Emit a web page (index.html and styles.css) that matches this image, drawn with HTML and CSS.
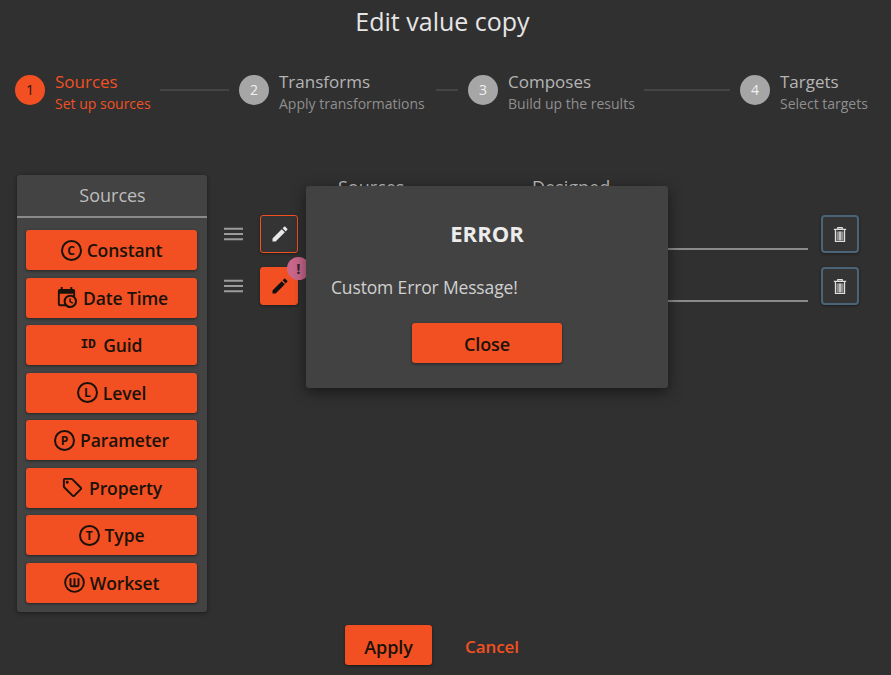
FILE: index.html
```html
<!DOCTYPE html>
<html lang="en">
<head>
<meta charset="utf-8">
<title>Edit value copy</title>
<link rel="stylesheet" href="styles.css">
</head>
<body>
<div class="page">
  <h1 class="title">Edit value copy</h1>
  <div class="stepper">
    <div class="step step-active step-w1"><span class="num">1</span><div class="step-text"><div class="step-title">Sources</div><div class="step-sub">Set up sources</div></div></div>
    <div class="line line-1"></div>
    <div class="step step-w2"><span class="num">2</span><div class="step-text"><div class="step-title">Transforms</div><div class="step-sub">Apply transformations</div></div></div>
    <div class="line line-2"></div>
    <div class="step step-w3"><span class="num">3</span><div class="step-text"><div class="step-title">Composes</div><div class="step-sub">Build up the results</div></div></div>
    <div class="line line-3"></div>
    <div class="step step-w4"><span class="num">4</span><div class="step-text"><div class="step-title">Targets</div><div class="step-sub">Select targets</div></div></div>
  </div>
  <div class="main">
    <aside class="panel">
      <div class="panel-head">Sources</div>
      <div class="panel-list">
        <button class="src"><span class="ltr">C</span>Constant</button>
        <button class="src"><svg class="ico" viewBox="0 0 24 24"><path d="M15,13H16.5V15.82L18.94,17.23L18.19,18.53L15,16.69V13M19,8H5V19H9.67C9.24,18.09 9,17.07 9,16A7,7 0 0,1 16,9C17.07,9 18.09,9.24 19,9.67V8M5,21C3.89,21 3,20.1 3,19V5C3,3.89 3.89,3 5,3H6V1H8V3H16V1H18V3H19A2,2 0 0,1 21,5V11.1C22.24,12.36 23,14.09 23,16A7,7 0 0,1 16,23C14.09,23 12.36,22.24 11.1,21H5M16,11.15A4.85,4.85 0 0,0 11.15,16C11.15,18.68 13.32,20.85 16,20.85A4.85,4.85 0 0,0 20.85,16C20.85,13.32 18.68,11.15 16,11.15Z"/></svg>Date Time</button>
        <button class="src"><span class="idg">ID</span>Guid</button>
        <button class="src"><span class="ltr">L</span>Level</button>
        <button class="src"><span class="ltr">P</span>Parameter</button>
        <button class="src"><svg class="ico" viewBox="0 0 24 24"><path d="M21.41 11.58L12.41 2.58C12.05 2.22 11.55 2 11 2H4C2.9 2 2 2.9 2 4V11C2 11.55 2.22 12.05 2.59 12.42L11.59 21.42C11.95 21.78 12.45 22 13 22S14.05 21.78 14.41 21.41L21.41 14.41C21.78 14.05 22 13.55 22 13S21.77 11.94 21.41 11.58M13 20L4 11V4H11L20 13L13 20M6.5 5A1.5 1.5 0 1 0 6.5 8 1.5 1.5 0 1 0 6.5 5Z"/></svg>Property</button>
        <button class="src"><span class="ltr">T</span>Type</button>
        <button class="src"><svg class="ico-w" viewBox="0 0 22 22"><circle cx="11" cy="11" r="9.8"/><path d="M6.8 6.5V13.5Q6.8 15 8.3 15H13.7Q15.2 15 15.2 13.5V6.5M11 6.5V15"/></svg>Workset</button>
      </div>
    </aside>
    <section class="editor">
      <div class="cols"><span class="col col-a">Sources</span><span class="col">Designed</span></div>
      <div class="row">
        <svg class="drag" viewBox="0 0 20 14"><path d="M0 1.5H20M0 7H20M0 12.5H20"/></svg>
        <button class="edit"><svg class="pen" viewBox="0 0 24 24"><path d="M20.71,7.04C21.1,6.65 21.1,6 20.71,5.63L18.37,3.29C18,2.9 17.35,2.9 16.96,3.29L15.12,5.12L18.87,8.87M3,17.25V21H6.75L17.81,9.93L14.06,6.18L3,17.25Z"/></svg></button>
        <div class="field"></div>
        <button class="del"><svg class="bin" viewBox="0 0 16 18"><path class="bin-fill" d="M4 5.5H12V15.5H4Z"/><path class="bin-line" d="M1 3.2H15M5.5 3V1.2H10.5V3M2.8 3.5V16.8H13.2V3.5M8 5.5V15.5"/></svg></button>
      </div>
      <div class="row">
        <svg class="drag" viewBox="0 0 20 14"><path d="M0 1.5H20M0 7H20M0 12.5H20"/></svg>
        <button class="edit edit-err"><svg class="pen" viewBox="0 0 24 24"><path d="M20.71,7.04C21.1,6.65 21.1,6 20.71,5.63L18.37,3.29C18,2.9 17.35,2.9 16.96,3.29L15.12,5.12L18.87,8.87M3,17.25V21H6.75L17.81,9.93L14.06,6.18L3,17.25Z"/></svg><span class="badge">!</span></button>
        <div class="field"></div>
        <button class="del"><svg class="bin" viewBox="0 0 16 18"><path class="bin-fill" d="M4 5.5H12V15.5H4Z"/><path class="bin-line" d="M1 3.2H15M5.5 3V1.2H10.5V3M2.8 3.5V16.8H13.2V3.5M8 5.5V15.5"/></svg></button>
      </div>
    </section>
  </div>
  <div class="actions">
    <button class="apply">Apply</button>
    <button class="cancel">Cancel</button>
  </div>
  <div class="modal">
    <h2 class="modal-title">ERROR</h2>
    <p class="modal-msg">Custom Error Message!</p>
    <div class="modal-foot"><button class="close">Close</button></div>
  </div>
</div>
</body>
</html>
```
FILE: styles.css
```css
* { box-sizing: border-box; }
html, body { margin: 0; padding: 0; }
body { background: #303030; font-family: "Open Sans", "Noto Sans", sans-serif; color: #e0e0e0; }
button { font-family: inherit; border: 0; padding: 0; cursor: pointer; }
.page { position: relative; width: 891px; height: 675px; overflow: hidden; display: flex; flex-direction: column; }

.title { margin: 0; height: 46px; padding-right: 6px; line-height: 43px; text-align: center; font-size: 25px; font-weight: 400; color: #e6e6e6; }

.stepper { display: flex; align-items: flex-start; padding: 29px 0 0 15px; height: 69px; }
.step { display: flex; gap: 10px; }
.step-w1 { width: 135px; }
.step-w2 { width: 187px; }
.step-w3 { width: 166px; }
.step-w4 { width: 130px; }
.num { width: 30px; height: 30px; flex: none; border-radius: 50%; background: #a6a6a6; color: #f0f0f0; font-size: 14px; line-height: 30px; text-align: center; }
.step-active .num { background: #f25022; color: #2a1208; }
.step-text { margin-top: -5px; white-space: nowrap; }
.step-title { font-size: 17px; line-height: 23px; color: #b5b5b5; }
.step-sub { font-size: 14px; line-height: 21px; color: #8f8f8f; }
.step-active .step-title, .step-active .step-sub { color: #f25022; }
.line { height: 2px; margin: 14px 10px 0; background: #444; }
.line-1 { width: 69px; }
.line-2 { width: 22px; }
.line-3 { width: 86px; }

.main { display: flex; padding: 60px 0 0 17px; }
.panel { width: 190px; height: 437px; background: #434343; border-radius: 3px; box-shadow: 0 1px 4px rgba(0,0,0,.45); }
.panel-head { height: 43px; line-height: 41px; text-align: center; font-size: 18px; color: #bdbdbd; border-bottom: 2px solid #8a8a8a; padding-left: 1px; }
.panel-list { display: flex; flex-direction: column; gap: 7.5px; padding: 12px 10px 0 9px; }
.src { height: 40px; display: flex; align-items: center; justify-content: center; gap: 5px; background: #f25022; color: #1a1208; border-radius: 3px; font-size: 17.5px; font-weight: 600; letter-spacing: -0.1px; box-shadow: 0 1px 3px rgba(0,0,0,.5); }
.ltr { width: 21px; height: 21px; border: 2px solid #1a1208; border-radius: 50%; font-size: 12px; line-height: 17px; font-weight: 700; text-align: center; }
.idg { font-family: "Liberation Mono", monospace; font-size: 13px; line-height: 20px; font-weight: 700; margin-right: 3px; letter-spacing: -0.5px; }
.ico { width: 23px; height: 23px; fill: #1a1208; }
.ico-w { width: 21px; height: 21px; fill: none; stroke: #1a1208; stroke-width: 2; }

.editor { flex: 1; padding: 0 32px 0 17px; }
.cols { height: 40px; display: flex; padding-left: 114px; font-size: 18px; color: #bdbdbd; }
.col-a { width: 194px; }
.row { height: 38px; margin-bottom: 14px; display: flex; align-items: center; }
.drag { width: 19px; height: 14px; fill: none; stroke: #9a9a9a; stroke-width: 2; }
.edit { position: relative; width: 38px; height: 38px; margin-left: 17px; padding-left: 2px; background: #343434; border: 1px solid #f25022; border-radius: 3px; display: flex; align-items: center; justify-content: center; box-shadow: 0 1px 3px rgba(0,0,0,.4); }
.pen { width: 20px; height: 20px; fill: #e8e8e8; }
.edit-err { background: #f25022; }
.edit-err .pen { fill: #111; }
.badge { position: absolute; left: 26px; top: -11px; width: 23px; height: 23px; border-radius: 50%; background: #c9678b; color: #3a2530; font-size: 15px; font-weight: 700; line-height: 23px; text-align: center; }
.field { flex: 1; height: 35px; align-self: flex-start; margin: 0 13px 0 10px; border-bottom: 2px solid #8a8a8a; }
.del { width: 38px; height: 38px; background: #343434; border: 2px solid #4a6478; border-radius: 4px; display: flex; align-items: center; justify-content: center; box-shadow: 0 1px 3px rgba(0,0,0,.4); }
.bin { width: 14px; height: 17px; }
.bin-fill { fill: #8d8d8d; }
.bin-line { fill: none; stroke: #dedede; stroke-width: 1.4; }

.actions { display: flex; justify-content: center; align-items: center; padding: 13px 0 0 5px; }
.apply { width: 87px; height: 40px; padding-top: 3px; background: #f25022; color: #1a1208; border-radius: 3px; font-size: 18px; font-weight: 600; letter-spacing: -0.1px; box-shadow: 0 1px 3px rgba(0,0,0,.5); }
.cancel { width: 118px; height: 40px; padding-top: 3px; margin-left: 1px; background: transparent; color: #f25022; font-size: 17px; font-weight: 600; letter-spacing: -0.1px; }

.modal { position: absolute; left: 306px; top: 186px; width: 362px; height: 202px; background: #424242; border-radius: 3px; box-shadow: 0 4px 14px rgba(0,0,0,.5); padding: 31px 25px 0; }
.modal-title { margin: 0; text-align: center; font-size: 22px; line-height: 32px; font-weight: 700; color: #ececec; }
.modal-msg { margin: 26px 0 0; font-size: 17.5px; line-height: 24px; color: #d0d0d0; letter-spacing: -0.15px; }
.modal-foot { display: flex; justify-content: center; margin-top: 24px; }
.close { width: 150px; height: 40px; padding-top: 2px; background: #f25022; color: #1a1208; border-radius: 3px; font-size: 18px; font-weight: 600; letter-spacing: -0.1px; box-shadow: 0 1px 3px rgba(0,0,0,.5); }
```
